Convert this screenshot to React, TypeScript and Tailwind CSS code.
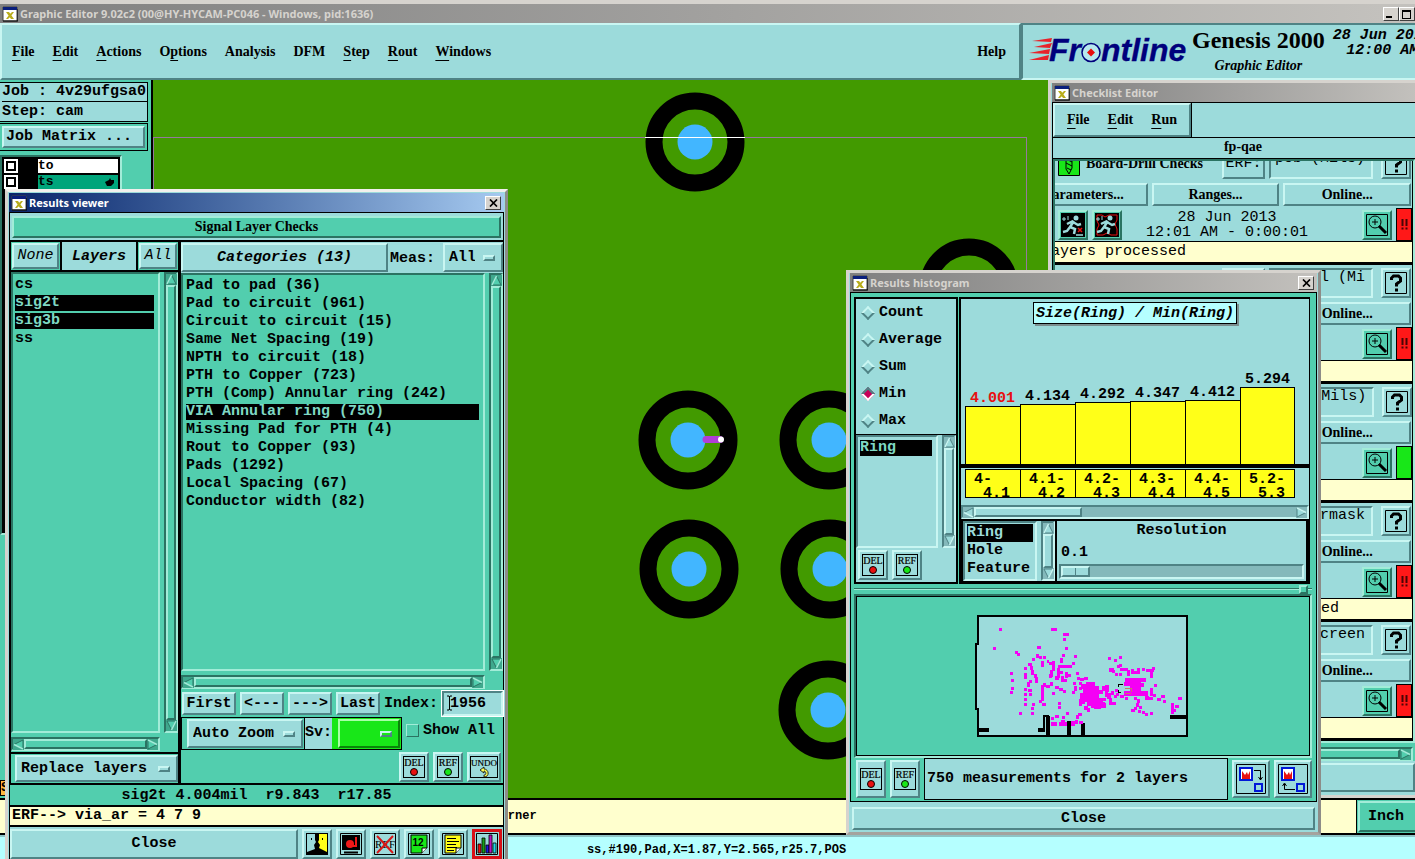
import { useState } from "react";
import type { ReactNode } from "react";
import { clsx } from "clsx";

const mono = "font-['Liberation_Mono',monospace] text-[15px] leading-[18px]";
const serif = "font-['Liberation_Serif',serif] text-[14px] leading-[18px] font-bold";
const tahoma = "font-['Noto_Sans',sans-serif] text-[11px] leading-[16px] font-bold";

const raised =
    "border-2 border-t-[#c9f6f2] border-l-[#c9f6f2] border-b-[#4f8385] border-r-[#4f8385]";
const sunken =
    "border-2 border-b-[#c9f6f2] border-r-[#c9f6f2] border-t-[#4f8385] border-l-[#4f8385]";
const raisedTeal =
    "border-2 border-t-[#a2ecd8] border-l-[#a2ecd8] border-b-[#2b7362] border-r-[#2b7362]";
const sunkenTeal =
    "border-2 border-b-[#a2ecd8] border-r-[#a2ecd8] border-t-[#2b7362] border-l-[#2b7362]";

const menus = [
    ["", "F", "ile"],
    ["", "E", "dit"],
    ["", "A", "ctions"],
    ["O", "p", "tions"],
    ["Analysis", "", ""],
    ["DFM", "", ""],
    ["", "S", "tep"],
    ["", "R", "out"],
    ["", "W", "indows"],
];

const categories = [
    "Pad to pad (36)",
    "Pad to circuit (961)",
    "Circuit to circuit (15)",
    "Same Net Spacing (19)",
    "NPTH to circuit (18)",
    "PTH to Copper (723)",
    "PTH (Comp) Annular ring (242)",
    "VIA Annular ring (750)",
    "Missing Pad for PTH (4)",
    "Rout to Copper (93)",
    "Pads (1292)",
    "Local Spacing (67)",
    "Conductor width (82)",
];

const bars = [
    { value: "4.001", height: 58, from: "4-", to: "4.1" },
    { value: "4.134", height: 60, from: "4.1-", to: "4.2" },
    { value: "4.292", height: 62, from: "4.2-", to: "4.3" },
    { value: "4.347", height: 63, from: "4.3-", to: "4.4" },
    { value: "4.412", height: 64, from: "4.4-", to: "4.5" },
    { value: "5.294", height: 77, from: "5.2-", to: "5.3" },
];

const checks = [
    { name: "Board-Drill Checks", erf: "pcb (Mils)", note: "4 layers processed", state: "bad" },
    { name: "Signal Layer Checks", erf: "signal (Mi", note: "", state: "bad" },
    { name: "Power/Ground Checks", erf: "p&g (Mils)", note: "", state: "ok" },
    { name: "Solder Mask Checks", erf: "soldermask", note: "There are some layers not processed", state: "bad" },
    { name: "Silk Screen Checks", erf: "silkscreen", note: "", state: "bad" },
];

const pads = [
    [694, 142],
    [968, 288],
    [687, 440],
    [828, 440],
    [688, 569],
    [829, 569],
    [827, 710],
];

// measurement marks: x, y, width, height
const marks = [
    [90, 54, 9, 9], [72, 111, 9, 9], [246, 54, 18, 9], [282, 69, 18, 9], [282, 84, 9, 9], [204, 108, 12, 9],
    [288, 111, 9, 9], [138, 123, 9, 9], [144, 129, 9, 9], [279, 132, 9, 9], [315, 135, 9, 9], [201, 132, 9, 12],
    [210, 138, 9, 9], [222, 138, 9, 9], [189, 144, 9, 9], [273, 144, 9, 15], [177, 159, 12, 9], [182, 168, 9, 12],
    [216, 153, 9, 18], [234, 150, 6, 9], [240, 156, 9, 10], [248, 153, 9, 30], [268, 164, 42, 10], [308, 156, 9, 9],
    [165, 171, 9, 9], [123, 186, 9, 9], [126, 207, 9, 9], [126, 231, 9, 9], [123, 243, 9, 9], [165, 189, 9, 18],
    [186, 180, 9, 15], [194, 192, 9, 12], [198, 201, 9, 18], [243, 180, 9, 21], [240, 192, 9, 12], [264, 174, 9, 30],
    [270, 183, 12, 9], [276, 198, 9, 18], [288, 186, 9, 18], [297, 192, 9, 9], [286, 207, 9, 9], [321, 186, 9, 9],
    [258, 198, 12, 12], [174, 216, 9, 15], [180, 210, 9, 9], [165, 234, 9, 9], [177, 237, 12, 9], [165, 249, 9, 9],
    [180, 249, 9, 9], [165, 264, 9, 9], [165, 279, 9, 9], [189, 279, 9, 9], [186, 291, 9, 9], [186, 306, 9, 9],
    [150, 306, 9, 9], [216, 225, 9, 24], [222, 219, 9, 12], [230, 225, 12, 9], [243, 216, 9, 12], [216, 249, 9, 24],
    [210, 270, 9, 9], [219, 279, 12, 9], [249, 246, 9, 9], [258, 228, 12, 9], [270, 234, 12, 9], [282, 240, 9, 9],
    [267, 276, 9, 9], [267, 288, 9, 9], [312, 216, 9, 9], [315, 228, 9, 15], [309, 243, 9, 9], [324, 201, 9, 9],
    [333, 204, 12, 9], [345, 201, 12, 9], [330, 216, 9, 9], [330, 231, 9, 9], [336, 222, 15, 15], [351, 216, 27, 12],
    [342, 228, 48, 48], [333, 249, 15, 33], [390, 240, 12, 12], [387, 264, 15, 12], [354, 276, 18, 12], [366, 276, 42, 18],
    [345, 288, 12, 12], [354, 294, 9, 12], [375, 288, 21, 9], [399, 228, 9, 15], [408, 225, 12, 21], [408, 246, 9, 15],
    [414, 249, 12, 18], [420, 264, 9, 21], [399, 279, 12, 15], [429, 276, 12, 9], [402, 264, 9, 9], [330, 267, 9, 21],
    [327, 309, 12, 9], [321, 315, 9, 12], [291, 306, 9, 9], [279, 318, 9, 9], [258, 315, 12, 9], [246, 321, 9, 9],
    [246, 336, 18, 12], [270, 336, 24, 12], [276, 330, 12, 9], [306, 333, 12, 15], [318, 330, 9, 12], [330, 333, 12, 9],
    [417, 141, 9, 9], [435, 147, 9, 9], [450, 138, 9, 9], [450, 162, 9, 9], [444, 165, 9, 9], [420, 174, 15, 12],
    [429, 180, 9, 9], [438, 189, 9, 9], [450, 189, 9, 9], [453, 174, 24, 9], [474, 180, 9, 18], [486, 177, 9, 15],
    [492, 183, 12, 9], [504, 174, 9, 18], [519, 174, 9, 9], [531, 177, 24, 9], [543, 183, 9, 21], [549, 171, 9, 9],
    [468, 204, 63, 12], [465, 216, 18, 12], [483, 213, 24, 42], [507, 210, 9, 48], [516, 219, 9, 12], [465, 243, 72, 15],
    [543, 234, 9, 24], [555, 222, 9, 9], [453, 255, 12, 9], [468, 261, 9, 9], [495, 261, 9, 9], [528, 258, 12, 12],
    [540, 261, 12, 9], [552, 252, 9, 9], [564, 264, 12, 9], [576, 255, 12, 9], [582, 270, 9, 9], [426, 243, 9, 12],
    [438, 237, 9, 9], [441, 249, 9, 9], [435, 255, 9, 9], [504, 267, 9, 12], [501, 279, 9, 12], [510, 288, 9, 9],
    [486, 297, 12, 9], [495, 291, 9, 9], [507, 300, 9, 9], [519, 303, 9, 9], [528, 309, 9, 9], [543, 306, 9, 9],
    [627, 261, 12, 9], [606, 279, 9, 12], [606, 291, 9, 21], [618, 285, 12, 9], [612, 297, 9, 9],
];

function XIcon() {
    return (
        <svg className="shrink-0" width="16" height="16" viewBox="0 0 16 16">
            <path d="M1 1h14v14H1z" fill="#fff" stroke="#444" />
            <path d="M1 1h14v3H1z" fill="#0a1f7c" />
            <path d="M4 6h3l5 7H9zM10 6h2l-3 4-3 3H4l3-4z" fill="#b9ac1b" />
            <path d="M1 15h15V3" fill="none" stroke="#000" />
        </svg>
    );
}

function CloseX() {
    return (
        <button
            type="button"
            aria-label="Close window"
            className="flex h-[14px] w-4 items-center justify-center border border-t-white border-l-white border-r-[#404040] border-b-[#404040] bg-[#d6d3ce]"
        >
            <svg width="9" height="8" viewBox="0 0 9 8">
                <path d="M1 0.5l7 7M8 0.5l-7 7" stroke="#000" strokeWidth="1.7" />
            </svg>
        </button>
    );
}

type TitleBarProps = { title: string; active?: boolean; closable?: boolean };

function TitleBar({ title, active, closable }: TitleBarProps) {
    return (
        <div
            className={clsx(
                "flex h-[19px] shrink-0 items-center gap-[2px] bg-linear-to-r pr-[3px] pl-[2px]",
                active
                    ? "from-[#0a246a] to-[#a6caf0] text-white"
                    : "from-[#808080] to-[#c3c1bd] text-[#d6d3ce]"
            )}
        >
            <XIcon />
            <span className={clsx(tahoma, "flex-1 whitespace-nowrap")}>{title}</span>
            {closable && <CloseX />}
        </div>
    );
}

type ArrowProps = { dir: "up" | "down" | "left" | "right"; teal?: boolean };

function Arrow({ dir, teal }: ArrowProps) {
    const light = teal ? "#a2ecd8" : "#c9f6f2";
    const dark = teal ? "#2b7362" : "#4f8385";
    const fill = teal ? "#52ceae" : "#9cdbdb";
    const turn = { up: 0, right: 90, down: 180, left: 270 }[dir];
    return (
        <button
            type="button"
            aria-label={`Scroll ${dir}`}
            className={clsx("size-[11px] shrink-0", teal ? "bg-[#3fa88d]" : "bg-[#84b9bb]")}
        >
            <svg width="11" height="11" viewBox="0 0 11 11">
                <g transform={`rotate(${turn} 5.5 5.5)`}>
                    <path d="M5.500 1L10 10H1z" fill={fill} stroke={dark} />
                    <path d="M5.500 1L1 10" stroke={light} strokeWidth="1.500" />
                </g>
            </svg>
        </button>
    );
}

type ScrollProps = { vertical?: boolean; teal?: boolean; thumb?: string };

function ScrollBar({ vertical, teal, thumb = "flex-1" }: ScrollProps) {
    return (
        <div
            className={clsx(
                "flex shrink-0 justify-between",
                vertical ? "w-[14px] flex-col" : "h-[14px]",
                teal ? sunkenTeal : sunken,
                teal ? "bg-[#52ceae]" : "bg-[#84b9bb]"
            )}
        >
            <Arrow dir={vertical ? "up" : "left"} teal={teal} />
            <div
                className={clsx(
                    thumb,
                    teal ? raisedTeal : raised,
                    teal ? "bg-[#52ceae]" : "bg-[#9cdbdb]"
                )}
            />
            {thumb !== "flex-1" && <div className="flex-1" />}
            <Arrow dir={vertical ? "down" : "right"} teal={teal} />
        </div>
    );
}

function IconButton({
    label,
    className,
    children,
}: {
    label: string;
    className?: string;
    children: ReactNode;
}) {
    return (
        <button
            type="button"
            aria-label={label}
            className={clsx(
                "flex shrink-0 items-center justify-center",
                className ?? clsx(raised, "h-[30px] w-[30px] bg-[#9cdbdb]")
            )}
        >
            {children}
        </button>
    );
}

function WordIcon({ word, dot }: { word: string; dot?: string }) {
    const width = word.length > 3 ? 28 : 22;
    return (
        <svg width={width} height="24" viewBox={`0 0 ${width} 24`}>
            <rect x="0.5" y="1.500" width={width - 1} height="21" fill="none" stroke="#000" />
            <text
                x={width / 2}
                y="10.500"
                textAnchor="middle"
                fontFamily="Liberation Serif"
                fontSize={word.length > 3 ? 9 : 10}
                stroke="#000"
                strokeWidth="0.2"
            >
                {word}
            </text>
            {dot ? (
                <circle cx={width / 2} cy="17" r="3.500" fill={dot} stroke="#000" />
            ) : (
                <path
                    d="M10 15l4-3v2c5 0 6 8 0 8v-2c3 0 2-4 0-4v2z"
                    fill="#ffff5a"
                    stroke="#000"
                    strokeWidth="0.8"
                />
            )}
        </svg>
    );
}

type DropdownProps = { label: string; value: string; className?: string };

function Dropdown({ label, value, className }: DropdownProps) {
    return (
        <div className={clsx("flex items-center gap-2 pr-[6px]", className ?? clsx(raised, "bg-[#9cdbdb]"))}>
            <select
                aria-label={label}
                className={clsx(mono, "min-w-0 flex-1 appearance-none bg-transparent pl-1 font-bold")}
            >
                <option>{value}</option>
            </select>
            <span className={clsx(raised, "h-[6px] w-3")} />
        </div>
    );
}

function MenuButton({ parts }: { parts: string[] }) {
    return (
        <button type="button" className={clsx(serif, "whitespace-nowrap")}>
            {parts[0]}
            <span className="underline underline-offset-4">{parts[1]}</span>
            {parts[2]}
        </button>
    );
}

function FrontlineLogo() {
    return (
        <svg width="162" height="32" viewBox="0 0 162 32" aria-label="Frontline" role="img">
            <g fill="#e8232a">
                <path d="M4 7l20-3-1 4z" />
                <path d="M6 13l18-4-2 5z" />
                <path d="M1 19l21-4-1 5z" />
                <path d="M1 26l20-5-1 5z" />
            </g>
            <g
                fontFamily="Liberation Sans"
                fontWeight="bold"
                fontStyle="italic"
                fontSize="32"
                fill="#00007c"
                stroke="#00007c"
                strokeWidth="0.3"
            >
                <text x="21" y="27">Fr</text>
                <text x="73" y="27">ntline</text>
            </g>
            <circle cx="63" cy="18.500" r="9" fill="#b7e8ee" stroke="#00007c" strokeWidth="1.500" />
            <path d="M63 14.500l4 4-4 4-4-4z" fill="#e80c0c" />
        </svg>
    );
}

function MenuBar() {
    return (
        <header className="flex h-[57px] shrink-0 bg-[#9cdbdb]">
            <nav className={clsx(raised, "flex min-w-0 flex-1 items-center gap-[18px] pr-[13px] pl-[10px]")}>
                {menus.map((parts) => (
                    <MenuButton key={parts.join("")} parts={parts} />
                ))}
                <span className="flex-1" />
                <MenuButton parts={["Help", "", ""]} />
            </nav>
            <div className={clsx(sunken, "flex w-[394px] shrink-0 overflow-hidden border-r-0 pl-[5px]")}>
                <div className="shrink-0 pt-[9px]">
                    <FrontlineLogo />
                </div>
                <div className="shrink-0 pl-[2px] text-center">
                    <h1 className="font-['Liberation_Serif',serif] text-[24px] leading-[30px] font-bold">
                        Genesis 2000
                    </h1>
                    <p className={clsx(serif, "pt-[2px] italic")}>Graphic Editor</p>
                </div>
                <div
                    className={clsx(
                        mono,
                        "shrink-0 pt-[3px] pl-2 text-center font-bold whitespace-nowrap italic"
                    )}
                >
                    <p className="leading-[15px]">28 Jun 2013</p>
                    <p className="leading-[15px]">12:00 AM</p>
                </div>
            </div>
        </header>
    );
}

function LayerCheckbox({ name }: { name: string }) {
    return (
        <input
            type="checkbox"
            aria-label={name}
            className="size-[14px] appearance-none bg-white outline-2 -outline-offset-4 outline-black"
        />
    );
}

function Sidebar() {
    return (
        <aside className={clsx(mono, "flex w-[153px] shrink-0 flex-col border-r-2 border-black bg-[#52ceae] pt-[2px]")}>
            <div className="mr-[3px] border border-l-0 border-black bg-[#9cdbdb] pl-[2px] font-bold">
                <p className="border-b border-black">Job : 4v29ufgsa0</p>
                <p className="pt-[1px]">Step: cam</p>
            </div>
            <div className="mt-[1px] mr-[3px] border border-l-0 border-black p-[2px]">
                <button
                    type="button"
                    className={clsx(raised, "w-full bg-[#9cdbdb] pl-[2px] text-left font-bold")}
                >
                    Job Matrix ...
                </button>
            </div>
            <div className="mt-1 flex h-[380px] shrink-0">
                <ul className={clsx(sunkenTeal, "w-[122px] bg-black px-[2px] text-[13px] leading-[14px] font-bold")}>
                    <li className="mt-[2px] flex">
                        <LayerCheckbox name="to" />
                        <span className="ml-5 flex-1 bg-white">to</span>
                    </li>
                    <li className="mt-[2px] flex">
                        <LayerCheckbox name="ts" />
                        <span className="ml-5 flex flex-1 items-center justify-between bg-[#00a57b] pr-1">
                            ts
                            <svg width="9" height="8" viewBox="0 0 9 8">
                                <path d="M0 4l4-2 1-2 1 2h3v3L6 8H2L1 6z" />
                            </svg>
                        </span>
                    </li>
                </ul>
            </div>
            <div className="flex-1" />
            <div className="mb-[2px] h-4 overflow-hidden border border-black bg-[#ffb840] text-[13px] leading-[14px] font-bold">
                Snap
            </div>
        </aside>
    );
}

function Board() {
    return (
        <svg className="h-full min-w-0 flex-1 bg-[#429a00]" aria-label="Board view" role="img">
            <g transform="translate(-152 -80)">
                {pads.map(([x, y]) => (
                    <g key={`${x}-${y}`}>
                        <circle cx={x} cy={y} r="41" fill="none" stroke="#000" strokeWidth="17" />
                        <circle cx={x} cy={y} r="17.500" fill="#42b6ff" />
                    </g>
                ))}
                <path
                    d="M152.500 840V137.500H1025.500V840"
                    fill="none"
                    stroke="#94799c"
                    shapeRendering="crispEdges"
                />
                <path d="M644 137.500H744" stroke="#fff" />
                <path d="M705 439.500H719" stroke="#b03fd8" strokeWidth="7" strokeLinecap="round" />
                <circle cx="720" cy="439.500" r="3" fill="#fff" />
            </g>
        </svg>
    );
}

function PickList({ items, selected, onPick }: { items: string[]; selected: string[]; onPick: (item: string) => void }) {
    return (
        <ul className={clsx(mono, "font-bold")}>
            {items.map((item) => (
                <li key={item} className="py-[1px]">
                    <button
                        type="button"
                        onClick={() => onPick(item)}
                        className={clsx(
                            "block w-full text-left leading-4 whitespace-nowrap",
                            selected.includes(item) && "bg-black text-[#7fd8c4]"
                        )}
                    >
                        {item}
                    </button>
                </li>
            ))}
        </ul>
    );
}

function LayersPane() {
    const [selected, setSelected] = useState(["sig2t", "sig3b"]);

    const toggle = (item: string) => {
        setSelected((prev) =>
            prev.includes(item) ? prev.filter((s) => s !== item) : [...prev, item]
        );
    };

    return (
        <section className="flex w-[171px] shrink-0 flex-col border-r-3 border-l border-black">
            <div className={clsx(mono, "flex h-[30px] shrink-0 border-b-2 border-black italic")}>
                <button type="button" className={clsx(raised, "m-[1px] w-[47px] bg-[#9cdbdb]")}>
                    None
                </button>
                <h2 className="flex flex-1 items-center justify-center border-x-2 border-black bg-[#9cdbdb] pt-[2px] font-bold">
                    Layers
                </h2>
                <button type="button" className={clsx(raised, "m-[1px] w-[38px] bg-[#9cdbdb]")}>
                    All
                </button>
            </div>
            <div className="flex min-h-0 flex-1 gap-1">
                <div className={clsx(sunkenTeal, "flex-1 overflow-hidden py-[2px] pr-1 pl-[2px]")}>
                    <PickList items={["cs", "sig2t", "sig3b", "ss"]} selected={selected} onPick={toggle} />
                </div>
                <ScrollBar vertical teal />
            </div>
            <div className="flex h-[19px] flex-col justify-end pr-[18px] pb-[1px]">
                <ScrollBar teal />
            </div>
            <div className="flex h-[33px] shrink-0 border-y-2 border-black pt-[1px] pb-[1px] pl-1">
                <Dropdown label="Layer action" value="Replace layers" className={clsx(raised, "flex-1 bg-[#9cdbdb]")} />
            </div>
        </section>
    );
}

function CategoriesPane() {
    const [category, setCategory] = useState("VIA Annular ring (750)");

    return (
        <section className="flex min-w-0 flex-1 flex-col">
            <div className={clsx(mono, "flex h-[31px] shrink-0 bg-[#9cdbdb] font-bold")}>
                <button type="button" className={clsx(raised, "my-[1px] w-[207px] italic")}>
                    Categories (13)
                </button>
                <span className="flex items-center pt-[2px] pl-[2px]">Meas:</span>
                <Dropdown label="Meas" value="All" className={clsx(raised, "my-[1px] ml-auto w-[60px]")} />
            </div>
            <div className="flex min-h-0 flex-1 gap-1">
                <div className={clsx(sunkenTeal, "flex-1 overflow-hidden py-[2px] pr-1 pl-[3px]")}>
                    <PickList items={categories} selected={[category]} onPick={setCategory} />
                </div>
                <ScrollBar vertical teal />
            </div>
            <div className="flex h-[19px] shrink-0 flex-col justify-end pr-[18px] pb-[1px]">
                <ScrollBar teal />
            </div>
            <div className={clsx(mono, "flex h-[27px] shrink-0 items-center gap-1 pl-[1px] font-bold")}>
                <button type="button" className={clsx(raised, "h-[23px] w-[54px] bg-[#9cdbdb]")}>
                    First
                </button>
                <button type="button" className={clsx(raised, "h-[23px] w-11 bg-[#9cdbdb]")}>
                    &lt;---
                </button>
                <button type="button" className={clsx(raised, "h-[23px] w-11 bg-[#9cdbdb]")}>
                    ---&gt;
                </button>
                <button type="button" className={clsx(raised, "h-[23px] w-11 bg-[#9cdbdb]")}>
                    Last
                </button>
                <label htmlFor="index">Index:</label>
                <div className="relative flex min-w-0 flex-1">
                    <input
                        id="index"
                        defaultValue="1956"
                        className={clsx(
                            sunken,
                            "h-[25px] w-full bg-[#9cdbdb] pl-[6px] outline-1 outline-white"
                        )}
                    />
                    {/* text pointer */}
                    <svg className="pointer-events-none absolute top-[4px] left-[4px]" width="7" height="16" viewBox="0 0 7 16">
                        <path d="M1 1h2l.5 1 .5-1h2M3.500 2v12M1 15h2l.5-1 .5 1h2" fill="none" stroke="#000" />
                    </svg>
                </div>
            </div>
            <div className={clsx(mono, "flex h-[33px] shrink-0 font-bold")}>
                <div className="flex w-[124px] border border-black py-[1px] pl-[5px]">
                    <Dropdown label="Zoom" value="Auto Zoom" />
                </div>
                <div className="flex w-[97px] border border-l-0 border-black bg-[#18e718]">
                    <span className="w-[27px] bg-[#9cdbdb] leading-[30px]">Sv:</span>
                    <Dropdown
                        label="Severity"
                        value=""
                        className="m-[1px] ml-[6px] flex-1 border-2 border-t-[#a7ffa7] border-r-[#0a840a] border-b-[#0a840a] border-l-[#a7ffa7]"
                    />
                </div>
                <label className="flex items-center gap-1 pb-[6px] pl-1">
                    <input
                        type="checkbox"
                        className="size-[13px] appearance-none border border-t-[#a2ecd8] border-r-[#2b7362] border-b-[#2b7362] border-l-[#a2ecd8]"
                    />
                    Show All
                </label>
            </div>
            <div className="flex h-[35px] shrink-0 items-center justify-end gap-1 border-b-2 border-black pr-[2px]">
                <IconButton label="Delete">
                    <WordIcon word="DEL" dot="#e81010" />
                </IconButton>
                <IconButton label="Reference">
                    <WordIcon word="REF" dot="#18e718" />
                </IconButton>
                <IconButton label="Undo" className={clsx(raised, "h-[30px] w-[34px] bg-[#9cdbdb]")}>
                    <WordIcon word="UNDO" />
                </IconButton>
            </div>
        </section>
    );
}

function ToolIcons() {
    return (
        <>
            <IconButton label="Compare">
                <svg width="22" height="22" viewBox="0 0 22 22">
                    <path d="M0 0h22v22H0z" fill="#000" />
                    <path d="M1 1h8v6l1 2-2 3 1 4-8 3z" fill="#9cdbdb" />
                    <path d="M13 1h8v18l-8-4 1-3-2-3 1-2z" fill="#ffff18" />
                    <path d="M5 5h1v2H5zM16 5h1v2h-1z" />
                </svg>
            </IconButton>
            <IconButton label="Snapshot">
                <svg width="22" height="22" viewBox="0 0 22 22">
                    <path d="M0.500 0.500h21v21H0.500z" fill="#9cdbdb" stroke="#000" />
                    <path d="M2 2h18v15H2z" />
                    <circle cx="10" cy="11" r="4" fill="#f01818" />
                    <path d="M15 4h2v10h-5v-2h3z" fill="#f01818" />
                    <path d="M4 19.500h14" stroke="#000" strokeWidth="2" />
                </svg>
            </IconButton>
            <IconButton label="Clear reference">
                <svg width="24" height="22" viewBox="0 0 24 22">
                    <path d="M1.500 0.500h21v21h-21z" fill="none" stroke="#000" />
                    <text x="12" y="15" textAnchor="middle" fontFamily="Liberation Serif" fontSize="11">
                        REF
                    </text>
                    <path d="M4 3l16 17M20 3L4 20" stroke="#d81818" strokeWidth="2" />
                </svg>
            </IconButton>
            <IconButton label="Numbered note">
                <svg width="22" height="22" viewBox="0 0 22 22">
                    <path d="M0.500 0.500h21v21H0.500z" fill="none" stroke="#000" />
                    <path d="M3 2h16v13l-5 5H3z" fill="#18e718" stroke="#000" />
                    <path d="M19 15h-5v5" fill="#fff" stroke="#000" />
                    <text x="10" y="13" textAnchor="middle" fontFamily="Liberation Sans" fontWeight="bold" fontSize="10">
                        12
                    </text>
                </svg>
            </IconButton>
            <IconButton label="Note">
                <svg width="22" height="22" viewBox="0 0 22 22">
                    <path d="M0.500 0.500h21v21H0.500z" fill="none" stroke="#000" />
                    <path d="M3 2h16v13l-5 5H3z" fill="#ffff18" stroke="#000" />
                    <path d="M5 5.500h9M5 8.500h12M5 11.500h9M5 14.500h10M5 17.500h7" stroke="#000" />
                    <path d="M19 15h-5v5" fill="#fff" stroke="#000" />
                </svg>
            </IconButton>
            <IconButton label="Histogram" className="h-[30px] w-[30px] border-3 border-[#d81018] bg-[#9cdbdb]">
                <svg width="22" height="22" viewBox="0 0 22 22">
                    <path d="M0.500 0.500h21v21H0.500z" fill="none" stroke="#000" />
                    <g stroke="#000" strokeWidth="0.8">
                        <path d="M2 11h3v9H2z" fill="#e81010" />
                        <path d="M6 5h3v15H6z" fill="#18a018" />
                        <path d="M10 12h3v8h-3z" fill="#1818e0" />
                        <path d="M13 2h3v18h-3z" fill="#c010c0" />
                        <path d="M17 10h3v10h-3z" fill="#20d8e8" />
                    </g>
                </svg>
            </IconButton>
        </>
    );
}

function ResultsViewer() {
    return (
        <div className="absolute top-[189px] bottom-0 left-[5px] flex w-[503px] flex-col border-3 border-b-0 border-[#d6d3ce] border-r-[#8d8c88] border-t-[#f2f0ec] bg-[#9cdbdb] pt-[1px] pr-[1px] pl-[1px]">
            <TitleBar title="Results viewer" active closable />
            <div className="flex min-h-0 flex-1 flex-col border border-b-0 border-black">
                <div className="shrink-0 border-b-2 border-black px-[2px] pt-[3px] pb-[2px]">
                    <h2 className={clsx(serif, raisedTeal, "bg-[#52ceae] text-center")}>
                        Signal Layer Checks
                    </h2>
                </div>
                <div className="flex min-h-0 flex-1 bg-[#52ceae]">
                    <LayersPane />
                    <CategoriesPane />
                </div>
                <div className={clsx(mono, "shrink-0 font-bold whitespace-pre")}>
                    <p className="bg-[#52ceae] pt-[2px] text-center">sig2t 4.004mil  r9.843  r17.85</p>
                    <p className="border-y-2 border-black bg-[#ffffce] pl-[2px]">
                        {"ERF--> via_ar = 4 7 9"}
                    </p>
                </div>
                <div className="flex h-8 shrink-0 items-start gap-1 pt-[2px] pr-[1px]">
                    <button type="button" className={clsx(mono, raised, "h-[30px] flex-1 font-bold")}>
                        Close
                    </button>
                    <ToolIcons />
                </div>
            </div>
        </div>
    );
}

function Runner({ red }: { red?: boolean }) {
    return (
        <svg width="24" height="24" viewBox="0 0 24 24">
            <path d="M0 0h24v24H0z" />
            {red && <path d="M2 2h5l3 2 4-2h8v5l-2 4 2 5v6h-6l-4-2-4 2H2v-6l2-4-2-4z" fill="none" stroke="#e81010" />}
            <circle cx="15" cy="5" r="2.500" fill="#9cdbdb" />
            <path
                d="M13 8L9 14M12 8l-6 3M12 9l5 3 3-1M9 14l5 2-1 5M9 14l-3 4-4 1"
                stroke="#9cdbdb"
                strokeWidth="2.500"
                fill="none"
            />
            <path d="M3 4v4M1 6h4M7 3v4" stroke="#9cdbdb" />
            {!red && <path d="M17 15l4 4M21 15l-4 4" stroke="#e81010" strokeWidth="1.500" />}
            {!red && <path d="M15 22h7" stroke="#9cdbdb" strokeWidth="1.500" />}
        </svg>
    );
}

function CheckRow({ check }: { check: (typeof checks)[number] }) {
    return (
        <li className="w-[396px] shrink-0 border-r border-b-3 border-black bg-[#9cdbdb]">
            <div className="flex h-[35px] items-center gap-1 pr-[1px]">
                <svg className="ml-[41px] shrink-0" width="22" height="24" viewBox="0 0 22 24">
                    <path d="M0.500 0.500h21v23H0.500z" fill="#18e718" stroke="#000" />
                    <path d="M8 2h6v14l-3 6-3-5zM8 7l6 3M8 11l6 3M9 16l4 2" fill="none" stroke="#000" />
                </svg>
                <span className={clsx(serif, "flex-1 pl-[2px] whitespace-nowrap")}>{check.name}</span>
                <button type="button" className={clsx(mono, raised, "h-[30px] w-[43px]")}>
                    ERF:
                </button>
                <input
                    readOnly
                    aria-label={`${check.name} ERF`}
                    value={check.erf}
                    className={clsx(mono, sunken, "mr-1 h-[30px] w-[104px] pb-[10px] pl-1")}
                />
                <IconButton label="Help">
                    <svg width="22" height="22" viewBox="0 0 22 22">
                        <path d="M0.500 0.500h21v21H0.500z" fill="none" stroke="#000" />
                        <path d="M6.500 8V6l2-2h5l2 2v3l-4 3v2.500" fill="none" stroke="#000" strokeWidth="3" />
                        <path d="M10 16.500h3v3h-3z" />
                    </svg>
                </IconButton>
            </div>
            <div className="flex h-[27px] items-center gap-1 pr-[1px] pl-[3px]">
                {["Parameters...", "Ranges...", "Online..."].map((label) => (
                    <button
                        key={label}
                        type="button"
                        className={clsx(serif, raised, "h-[23px] flex-1")}
                    >
                        {label}
                    </button>
                ))}
            </div>
            <div className="flex h-[33px] items-center gap-1">
                <IconButton label="Run" className={clsx(raisedTeal, "ml-[41px] h-[30px] w-[30px] bg-[#52ceae]")}>
                    <Runner />
                </IconButton>
                <IconButton label="Run with changes" className={clsx(raisedTeal, "h-[30px] w-[30px] bg-[#52ceae]")}>
                    <Runner red />
                </IconButton>
                <div className={clsx(mono, "w-[202px] text-center")}>
                    <p className="leading-[15px]">28 Jun 2013</p>
                    <p className="leading-[15px]">12:01 AM - 0:00:01</p>
                </div>
                <IconButton label="View results" className={clsx(raisedTeal, "ml-auto h-[30px] w-[30px] bg-[#52ceae]")}>
                    <svg width="22" height="22" viewBox="0 0 22 22">
                        <path d="M0.500 0.500h21v21H0.500z" fill="none" stroke="#000" />
                        <circle cx="9" cy="8" r="6" fill="none" stroke="#000" />
                        <path d="M6 8h6M9 5v6" stroke="#000" />
                        <path d="M13 12l7 7" stroke="#000" strokeWidth="3" />
                    </svg>
                </IconButton>
                <span
                    className={clsx(
                        "flex h-[33px] w-4 items-center justify-center gap-[2px] border border-black",
                        check.state === "ok" ? "bg-[#18e718]" : "bg-[#ff1818]"
                    )}
                >
                    {check.state === "bad" && (
                        <svg width="7" height="11" viewBox="0 0 7 11">
                            <path d="M1.500 0v7M5.500 0v7M1.500 8.500v2M5.500 8.500v2" stroke="#4a0505" strokeWidth="2" />
                        </svg>
                    )}
                </span>
            </div>
            <p className={clsx(mono, "h-[21px] border-t border-black bg-[#ffffce] pt-[1px] pl-[7px] whitespace-nowrap")}>
                {check.note}
            </p>
        </li>
    );
}

function ChecklistEditor() {
    return (
        <div className="absolute top-[80px] bottom-[61px] left-[1048px] flex w-[372px] flex-col border-3 border-[#d6d3ce] border-r-[#8d8c88] bg-[#9cdbdb] pl-[1px]">
            <TitleBar title="Checklist Editor" />
            <div className="flex min-h-0 flex-1 flex-col border-t border-l border-black">
                <nav className="flex h-[35px] shrink-0 border-b border-black">
                    <div className={clsx(raised, "flex items-center gap-[18px] px-3 shadow-[1px_0_0_#000]")}>
                        <MenuButton parts={["", "F", "ile"]} />
                        <MenuButton parts={["", "E", "dit"]} />
                        <MenuButton parts={["", "R", "un"]} />
                    </div>
                </nav>
                <h2 className={clsx(serif, "h-[21px] shrink-0 border-b border-black pr-3 pl-7 text-center")}>
                    fp-qae
                </h2>
                <div className={clsx(sunkenTeal, "mr-[2px] flex min-h-0 flex-1 flex-col")}>
                    <ul className="flex min-h-0 flex-1 flex-col items-end justify-end overflow-hidden">
                        {checks.map((check) => (
                            <CheckRow key={check.name} check={check} />
                        ))}
                    </ul>
                </div>
                <div className="shrink-0 bg-[#52ceae] pt-1 pr-1">
                    <ScrollBar teal />
                </div>
                <div className="h-[34px] shrink-0 p-[2px]">
                    <button type="button" aria-label="Message" className={clsx(raised, "h-[29px] w-full")} />
                </div>
            </div>
        </div>
    );
}

const stats = ["Count", "Average", "Sum", "Min", "Max"];

function StatsPane() {
    const [stat, setStat] = useState("Min");
    const [shape, setShape] = useState("Ring");

    return (
        <section className="flex w-[104px] shrink-0 flex-col border-2 border-black bg-[#9cdbdb]">
            <div className="flex flex-col border-b border-black">
                {stats.map((name) => (
                    <label key={name} className={clsx(mono, "flex h-[27px] items-center gap-[6px] pl-[7px] font-bold")}>
                        <input
                            type="radio"
                            name="stat"
                            checked={stat === name}
                            onChange={() => setStat(name)}
                            className="size-[10px] rotate-45 appearance-none border-2 border-t-[#c9f6f2] border-r-[#4f8385] border-b-[#4f8385] border-l-[#c9f6f2] checked:border-t-[#4f8385] checked:border-r-white checked:border-b-white checked:border-l-[#4f8385] checked:bg-[#c8005a]"
                        />
                        {name}
                    </label>
                ))}
            </div>
            <div className="flex min-h-0 flex-1 gap-1">
                <div className={clsx(sunken, "flex-1 py-[2px] pr-1 pl-[2px]")}>
                    <PickList items={["Ring"]} selected={[shape]} onPick={setShape} />
                </div>
                <ScrollBar vertical />
            </div>
            <div className="flex h-[34px] items-center gap-1 pl-[2px]">
                <IconButton label="Delete">
                    <WordIcon word="DEL" dot="#e81010" />
                </IconButton>
                <IconButton label="Reference">
                    <WordIcon word="REF" dot="#18e718" />
                </IconButton>
            </div>
        </section>
    );
}

function Chart() {
    return (
        <div className="flex min-h-0 flex-1 flex-col bg-[#9cdbdb]">
            <h3
                className={clsx(
                    mono,
                    "mx-auto mt-[3px] h-[22px] border border-black bg-[#b5ffff] px-[2px] pt-[2px] font-bold italic shadow-[2px_2px_0_#7b8f90]"
                )}
            >
                Size(Ring) / Min(Ring)
            </h3>
            <div className={clsx(mono, "flex flex-1 items-end border-b-4 border-black pl-1 font-bold")}>
                {bars.map((bar, idx) => (
                    <div key={bar.value} className="w-[55px]">
                        <p className={clsx("text-center leading-[14px]", idx === 0 && "text-[#e81010]")}>
                            {bar.value}
                        </p>
                        <div
                            className={clsx("border-t border-l border-black bg-[#ffff18]", idx === bars.length - 1 && "border-r")}
                            style={{ height: bar.height }}
                        />
                    </div>
                ))}
            </div>
            <div className={clsx(mono, "mt-[1px] flex h-[32px] overflow-hidden pl-1 font-bold")}>
                {bars.map((bar, idx) => (
                    <div
                        key={bar.from}
                        className={clsx(
                            "h-[29px] w-[55px] border-y border-l border-black bg-[#ffff18] pt-[3px] pl-2",
                            idx === bars.length - 1 && "border-r"
                        )}
                    >
                        <p className="leading-[14px]">{bar.from}</p>
                        <p className="pl-[9px] leading-[14px]">{bar.to}</p>
                    </div>
                ))}
            </div>
        </div>
    );
}

function ResolutionPane() {
    const [feature, setFeature] = useState("Ring");

    return (
        <div className="flex h-[65px] shrink-0 border-2 border-r-3 border-b-3 border-black bg-[#9cdbdb]">
            <div className={clsx(sunken, "w-[74px] px-[2px] pt-[1px]")}>
                <ul>
                    {["Ring", "Hole", "Feature"].map((name) => (
                        <li key={name}>
                            <button
                                type="button"
                                onClick={() => setFeature(name)}
                                className={clsx(
                                    mono,
                                    "block w-full text-left font-bold",
                                    feature === name && "bg-black text-[#9cdbdb]"
                                )}
                            >
                                {name}
                            </button>
                        </li>
                    ))}
                </ul>
            </div>
            <div className="flex pl-1">
                <ScrollBar vertical />
            </div>
            <div className={clsx(mono, "flex min-w-0 flex-1 flex-col border-l-2 border-black pr-[2px] pl-[2px] font-bold")}>
                <label htmlFor="resolution" className="pt-[1px] text-center">
                    Resolution
                </label>
                <output className="mt-1 pl-[2px]">0.1</output>
                <input
                    id="resolution"
                    type="range"
                    min="0"
                    max="10"
                    defaultValue="0"
                    className={clsx(
                        sunken,
                        "mt-[2px] block h-[15px] w-full appearance-none bg-[#84b9bb] [&::-webkit-slider-thumb]:h-[11px] [&::-webkit-slider-thumb]:w-[29px] [&::-webkit-slider-thumb]:appearance-none [&::-webkit-slider-thumb]:border-2 [&::-webkit-slider-thumb]:border-t-[#c9f6f2] [&::-webkit-slider-thumb]:border-r-[#4f8385] [&::-webkit-slider-thumb]:border-b-[#4f8385] [&::-webkit-slider-thumb]:border-l-[#c9f6f2] [&::-webkit-slider-thumb]:bg-[linear-gradient(90deg,#9cdbdb_12px,#4f8385_12px,#4f8385_13px,#9cdbdb_13px)]"
                    )}
                />
            </div>
        </div>
    );
}

function BoardMap() {
    return (
        <svg width="230" height="135" viewBox="0 0 690 405" shapeRendering="crispEdges" aria-label="Measurement map" role="img">
            <path d="M27 18H654V378H27V297H21V102H27Z" fill="#9cdbdb" />
            {/* board outline with the slots cut in its lower edge */}
            <path
                d="M657 317H606V324H654V378H27V297H21V102H27V18H654V317"
                fill="none"
                stroke="#000"
                strokeWidth="6"
            />
            <path d="M27 360H60M207 360H228" stroke="#000" strokeWidth="12" />
            <path d="M224 364V318H237V378M297 378V336H303V378" fill="none" stroke="#000" strokeWidth="6" />
            <path d="M236 318V378M342 339V378" stroke="#000" strokeWidth="11" />
            <g fill="#f400f4">
                {marks.map(([x, y, width, height]) => (
                    <rect key={`${x}-${y}`} x={x} y={y} width={width} height={height} />
                ))}
            </g>
            <path d="M462 222H448V230M448 240V248H456" fill="none" stroke="#000" strokeWidth="3" />
            <path d="M468 234H486V246M468 249H486" fill="none" stroke="#c57868" strokeWidth="3" />
        </svg>
    );
}

function SwapIcon({ up }: { up?: boolean }) {
    return (
        <svg width="30" height="30" viewBox="0 0 30 30">
            <path d="M0.500 0.500h29v29H0.500z" fill="none" stroke="#000" />
            <path d="M4 4h12v12H4z" fill="#fff" stroke="#0018d8" strokeWidth="2" />
            <path d="M6 15V7l3 4 2-3 1 3 2-4v8z" fill="#e81010" />
            <path d="M19 20h7v7h-7z" fill="none" stroke="#0018d8" strokeWidth="2" />
            {up ? (
                <path d="M17 25.500H6.500V20M4.500 22l2-3 2 3" fill="none" stroke="#000" />
            ) : (
                <path d="M18 6.500h6.500V16M22.500 13l2 3 2-3" fill="none" stroke="#000" />
            )}
        </svg>
    );
}

function ResultsHistogram() {
    return (
        <div className="absolute top-[270px] bottom-[24px] left-[846px] flex w-[475px] flex-col border-3 border-[#d6d3ce] border-r-[#8d8c88] border-b-[#a5a39e] bg-[#9cdbdb] pr-[1px] pl-[1px]">
            <TitleBar title="Results histogram" closable />
            <div className="flex min-h-0 flex-1 flex-col border border-black bg-[#52ceae] pt-1 pr-1 pl-[3px]">
                <div className="flex h-[287px] shrink-0 gap-[1px] pr-[2px]">
                    <StatsPane />
                    <div className="flex min-w-0 flex-1 flex-col border-2 border-r-1 border-b-0 border-black">
                        <Chart />
                        <div className="flex flex-col bg-[#9cdbdb] pt-1">
                            <ScrollBar thumb="w-[108px]" />
                        </div>
                        <ResolutionPane />
                    </div>
                </div>
                <div className="flex h-[10px] shrink-0 items-center">
                    <span className="h-[2px] flex-1 border-t border-[#2b7362] bg-[#a2ecd8]" />
                    <span className={clsx(raisedTeal, "size-[9px] bg-[#52ceae]")} />
                    <span className="h-[2px] w-1 border-t border-[#2b7362] bg-[#a2ecd8]" />
                </div>
                <div className={clsx(sunkenTeal, "flex min-h-0 flex-1")}>
                    <div className="flex flex-1 items-center justify-center border border-black pt-[3px] pl-[2px]">
                        <BoardMap />
                    </div>
                </div>
                <div className="flex h-[43px] shrink-0 items-center gap-1 pl-[2px]">
                    <IconButton label="Delete" className={clsx(raised, "h-[38px] w-[30px] bg-[#9cdbdb]")}>
                        <WordIcon word="DEL" dot="#e81010" />
                    </IconButton>
                    <IconButton label="Reference" className={clsx(raised, "h-[38px] w-[30px] bg-[#9cdbdb]")}>
                        <WordIcon word="REF" dot="#18e718" />
                    </IconButton>
                    <p className={clsx(mono, "flex h-[42px] flex-1 items-center border border-black bg-[#9cdbdb] pl-[2px] font-bold")}>
                        750 measurements for 2 layers
                    </p>
                    <IconButton label="Send down" className={clsx(raised, "h-[38px] w-[38px] bg-[#9cdbdb]")}>
                        <SwapIcon />
                    </IconButton>
                    <IconButton label="Send up" className={clsx(raised, "h-[38px] w-[38px] bg-[#9cdbdb]")}>
                        <SwapIcon up />
                    </IconButton>
                </div>
            </div>
            <div className="shrink-0 p-[2px]">
                <button type="button" className={clsx(mono, raised, "h-[23px] w-full font-bold")}>
                    Close
                </button>
            </div>
        </div>
    );
}

export default function App() {
    return (
        <div className="relative flex h-screen w-full flex-col overflow-hidden bg-[#9cdbdb] text-black">
            <div className="flex shrink-0 items-center border-t-4 border-[#d6d3ce] bg-[#c3c1bd]">
                <div className="min-w-0 flex-1">
                    <TitleBar title="Graphic Editor 9.02c2 (00@HY-HYCAM-PC046 - Windows, pid:1636)" />
                </div>
                <button
                    type="button"
                    aria-label="Minimize"
                    className="flex h-[14px] w-4 items-end border border-t-white border-r-[#404040] border-b-[#404040] border-l-white bg-[#d6d3ce] p-[2px]"
                >
                    <span className="h-[2px] w-[6px] bg-black" />
                </button>
                <button
                    type="button"
                    aria-label="Maximize"
                    className="h-[14px] w-4 border border-t-white border-r-[#404040] border-b-[#404040] border-l-white bg-[#d6d3ce] p-[2px]"
                >
                    <span className="block h-[9px] w-[9px] border border-t-2 border-black" />
                </button>
            </div>
            <MenuBar />
            <main className="flex min-h-0 flex-1">
                <Sidebar />
                <Board />
            </main>
            <div className={clsx(mono, "flex h-[37px] shrink-0 border-y-2 border-black bg-[#ffffce] font-bold")}>
                <p className="flex-1 pl-[407px] text-[12px] leading-8">Pick second corner</p>
                <div className="w-[59px] border-l border-black bg-[#52ceae] p-[1px]">
                    <button type="button" className={clsx(raisedTeal, "h-[31px] w-[70px] pl-2 text-left")}>
                        Inch
                    </button>
                </div>
            </div>
            <footer className={clsx(mono, "h-6 shrink-0 border-t-2 border-[#8fc3c5] bg-[#b5ffff] pl-[18px] text-center font-bold")}>
                <p className="pt-[2px] text-[12px] leading-[22px]">ss,#190,Pad,X=1.87,Y=2.565,r25.7,POS</p>
            </footer>
            <ChecklistEditor />
            <ResultsViewer />
            <ResultsHistogram />
        </div>
    );
}
